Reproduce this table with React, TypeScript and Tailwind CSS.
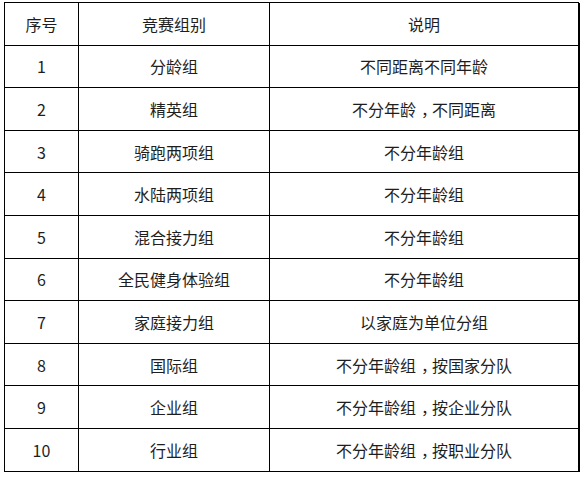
import React from 'react';

const rows = [
  ['1', '分龄组', '不同距离不同年龄'],
  ['2', '精英组', '不分年龄，不同距离'],
  ['3', '骑跑两项组', '不分年龄组'],
  ['4', '水陆两项组', '不分年龄组'],
  ['5', '混合接力组', '不分年龄组'],
  ['6', '全民健身体验组', '不分年龄组'],
  ['7', '家庭接力组', '以家庭为单位分组'],
  ['8', '国际组', '不分年龄组，按国家分队'],
  ['9', '企业组', '不分年龄组，按企业分队'],
  ['10', '行业组', '不分年龄组，按职业分队'],
];

const cell =
  'flex h-[42.6px] items-center justify-center border-b border-r border-black';

function Desc({ text }: { text: string }) {
  const parts = text.split('，');
  return (
    <span className="whitespace-nowrap">
      {parts.map((p, i) => (
        <React.Fragment key={i}>
          {i > 0 && <span className="relative left-[5px]">，</span>}
          {p}
        </React.Fragment>
      ))}
    </span>
  );
}

export default function App() {
  return (
    <div
      className="h-[477px] w-[581px] bg-white pl-[4px] pt-[2px] text-[16px] text-[#1e1e1e]"
      style={{ fontFamily: '"Microsoft YaHei", "Noto Sans CJK SC", sans-serif' }}
    >
      <div className="grid w-[575px] grid-cols-[74px_191px_310px] border-l border-t border-black">
        <div className={cell}>序号</div>
        <div className={cell}>竞赛组别</div>
        <div className={cell + ' border-r-2'}>说明</div>
        {rows.map(([no, group, desc]) => (
          <React.Fragment key={no}>
            <div className={cell}>{no}</div>
            <div className={cell}>{group}</div>
            <div className={cell + ' border-r-2'}>
              <Desc text={desc} />
            </div>
          </React.Fragment>
        ))}
      </div>
    </div>
  );
}
